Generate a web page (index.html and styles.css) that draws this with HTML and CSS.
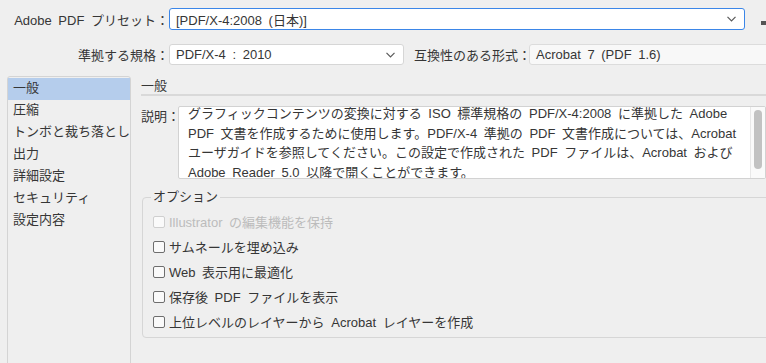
FILE: index.html
```html
<!DOCTYPE html>
<html lang="ja">
  <head>
    <meta charset="UTF-8" />
    <meta name="viewport" content="width=device-width, initial-scale=1.0" />
    <title>Adobe PDF プリセット</title>
    <link rel="stylesheet" href="styles.css">
  </head>
  <body>
    <div class="top">
      <div class="row">
        <label class="lbl">Adobe PDF プリセット：</label>
        <div class="select select-preset">
          <span>[PDF/X-4:2008 (日本)]</span>
          <svg class="chev" width="9" height="6" viewBox="0 0 9 6"><path d="M0.5 0.8 L4.5 4.8 L8.5 0.8" fill="none" stroke="#5a5a5a" stroke-width="1.2"/></svg>
        </div>
        <span class="tool-icon"></span>
      </div>
      <div class="row row-2">
        <label class="lbl">準拠する規格：</label>
        <div class="select select-std">
          <span>PDF/X-4 : 2010</span>
          <svg class="chev" width="9" height="6" viewBox="0 0 9 6"><path d="M0.5 0.8 L4.5 4.8 L8.5 0.8" fill="none" stroke="#5a5a5a" stroke-width="1.2"/></svg>
        </div>
        <label class="lbl-inline">互換性のある形式：</label>
        <div class="field">Acrobat 7 (PDF 1.6)</div>
      </div>
    </div>

    <div class="main">
      <ul class="nav">
        <li class="active">一般</li>
        <li>圧縮</li>
        <li>トンボと裁ち落とし</li>
        <li>出力</li>
        <li>詳細設定</li>
        <li>セキュリティ</li>
        <li>設定内容</li>
      </ul>

      <div class="panel">
        <h2>一般</h2>
        <div class="desc-row">
          <span class="desc-lbl">説明：</span>
          <div class="desc">
            <div class="desc-text">
              グラフィックコンテンツの変換に対する ISO 標準規格の PDF/X-4:2008 に準拠した Adobe<br>
              PDF 文書を作成するために使用します。PDF/X-4 準拠の PDF 文書作成については、Acrobat<br>
              ユーザガイドを参照してください。この設定で作成された PDF ファイルは、Acrobat および<br>
              Adobe Reader 5.0 以降で開くことができます。
            </div>
            <div class="scrollbar"><div class="thumb"></div></div>
          </div>
        </div>

        <fieldset class="options">
          <legend>オプション</legend>
          <div class="check disabled"><span class="box"></span>Illustrator の編集機能を保持</div>
          <div class="check"><span class="box"></span>サムネールを埋め込み</div>
          <div class="check"><span class="box"></span>Web 表示用に最適化</div>
          <div class="check"><span class="box"></span>保存後 PDF ファイルを表示</div>
          <div class="check"><span class="box"></span>上位レベルのレイヤーから Acrobat レイヤーを作成</div>
        </fieldset>
      </div>
    </div>
  </body>
</html>
```

FILE: styles.css
```css
body {
  font-family: "Liberation Sans", "Noto Sans CJK JP", sans-serif;
  font-size: 13px;
  word-spacing: 3px;
  color: #363636;
  background-color: #efefef;
  margin: 0;
  width: 766px;
  height: 363px;
  overflow: hidden;
}
.top {
  padding-top: 8px;
}
.row {
  display: flex;
  align-items: center;
  height: 22px;
}
.row-2 {
  margin-top: 14px;
  height: 21px;
}
.lbl {
  width: 169px;
  flex: none;
  text-align: right;
  white-space: nowrap;
}
.lbl-inline {
  margin-left: 10px;
  white-space: nowrap;
}
.select {
  box-sizing: border-box;
  height: 100%;
  display: flex;
  align-items: center;
  justify-content: space-between;
  padding: 0 8px 0 6px;
  background: #fff;
  border: 1px solid #d6d6d6;
  border-radius: 3px;
  white-space: nowrap;
}
.select-preset {
  width: 576px;
  border-color: #3b86e8;
}
.select-std {
  width: 235px;
}
.chev {
  flex: none;
}
.tool-icon {
  width: 5px;
  height: 4px;
  margin: 7px 0 0 16px;
  background: #555;
}
.field {
  box-sizing: border-box;
  height: 100%;
  flex: 1;
  margin-left: -2px;
  margin-right: -4px;
  padding-left: 6px;
  display: flex;
  align-items: center;
  background: #f8f8f8;
  border: 1px solid #dcdcdc;
  border-radius: 3px;
  white-space: nowrap;
}
.main {
  display: flex;
  margin-top: 11px;
}
.nav {
  list-style: none;
  margin: 0 0 0 7px;
  padding: 1px 0 0;
  width: 124px;
  height: 300px;
  box-sizing: border-box;
  border: 1px solid #d4d4d4;
  border-radius: 3px;
  flex: none;
}
.nav li {
  height: 22px;
  line-height: 20px;
  padding-left: 5px;
  white-space: nowrap;
  overflow: hidden;
}
.nav li.active {
  background-color: #b5cdec;
}
.panel {
  flex: 1;
  margin-left: 10px;
  min-width: 0;
}
h2 {
  margin: 0;
  padding-top: 2px;
  font-size: 13px;
  font-weight: normal;
  line-height: 16px;
  border-bottom: 2px solid #d9d9d9;
}
.desc-row {
  display: flex;
  margin-top: 10px;
}
.desc-lbl {
  width: 37px;
  flex: none;
  line-height: 20px;
  margin-top: 1px;
  white-space: nowrap;
}
.desc {
  display: flex;
  flex: 1;
  height: 73px;
  box-sizing: border-box;
  background: #fff;
  border: 1px solid #d2d2d2;
  border-radius: 2px;
  overflow: hidden;
}
.desc-text {
  flex: 1;
  padding-left: 9px;
  margin-top: -3px;
  line-height: 19.5px;
  white-space: nowrap;
  overflow: hidden;
}
.scrollbar {
  width: 14px;
  flex: none;
  border-left: 1px solid #e8e8e8;
  background: #fafafa;
  padding-top: 3px;
}
.thumb {
  width: 8px;
  height: 59px;
  margin-left: 3px;
  border-radius: 4px;
  background: #c2c2c2;
}
.options {
  margin: 10px -10px 0 1px;
  padding: 4px 0 3px 10px;
  border: 1px solid #d6d6d6;
  border-radius: 4px;
}
.options legend {
  padding: 0 2px;
  margin-left: -2px;
  line-height: 16px;
}
.check {
  display: flex;
  align-items: center;
  height: 25px;
  white-space: nowrap;
}
.box {
  width: 12px;
  height: 12px;
  box-sizing: border-box;
  margin-right: 4px;
  border: 1px solid #6e6e6e;
  border-radius: 2px;
  background: #fafafa;
}
.check.disabled {
  color: #bcbcbc;
}
.check.disabled .box {
  border-color: #cfcfcf;
}
```
